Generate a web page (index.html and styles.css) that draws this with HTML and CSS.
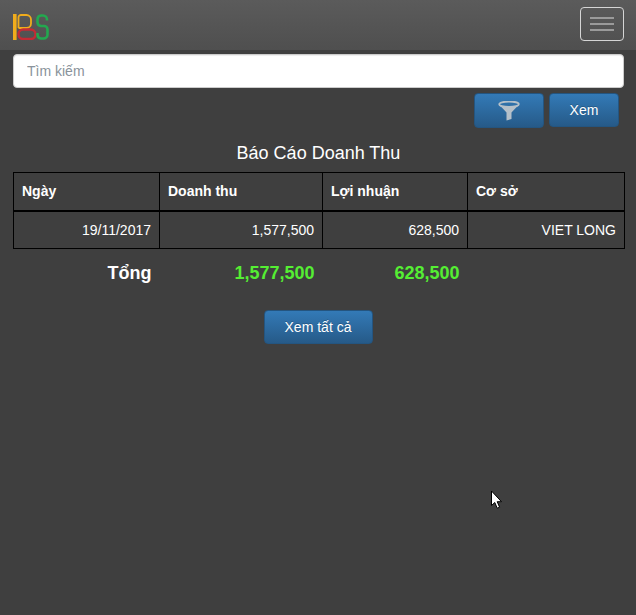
FILE: index.html
```html
<!DOCTYPE html>
<html lang="vi">
<head>
<meta charset="utf-8">
<title>Báo Cáo Doanh Thu</title>
<link rel="stylesheet" href="styles.css">
</head>
<body>
<nav class="navbar">
  <svg class="logo" width="36" height="26" viewBox="0 0 36 26" fill="none">
    <rect x="0" y="0" width="3.6" height="26" fill="#f0ac1c"/>
    <path d="M6 1.2h7a5.2 5.2 0 0 1 5.2 5.2v0a5.2 5.2 0 0 1-5.2 5.2h-7" stroke="#c8353a" stroke-width="0" />
    <path d="M5.5 14V3.5A2.5 2.5 0 0 1 8 1h5.5A4.5 4.5 0 0 1 18 5.500v4A4.500 4.500 0 0 1 13.500 14H5.500" stroke="#f0ac1c" stroke-width="1.800"/>
    <rect x="5.500" y="15.500" width="17" height="9.500" rx="4.700" stroke="#c42b35" stroke-width="2.400"/>
    <path d="M34 6.500V5.500A4 4 0 0 0 30 1.500H28A4 4 0 0 0 24.500 5.500V8A4 4 0 0 0 28 12H31A3.500 3.500 0 0 1 34.500 15.500V20.500A4 4 0 0 1 30.500 24.500H28A4 4 0 0 1 24.500 20.500V19" stroke="#23a84f" stroke-width="2.600"/>
  </svg>
  <button class="toggler" type="button" aria-label="Menu">
    <span class="bar"></span><span class="bar"></span><span class="bar"></span>
  </button>
</nav>
<main class="content">
  <input class="search" type="text" placeholder="Tìm kiếm">
  <div class="actions">
    <button class="btn btn-filter" type="button" aria-label="Lọc">
      <svg width="22" height="20" viewBox="0 0 22 20">
        <ellipse cx="11" cy="3.200" rx="9.800" ry="2.700" fill="none" stroke="#b5c0c9" stroke-width="1.800"/>
        <path d="M1.500 4 8.500 11.500V19.500L13.500 18V11.500L20.500 4C17 6.500 5 6.500 1.500 4Z" fill="#b5c0c9"/>
      </svg>
    </button>
    <button class="btn btn-view" type="button">Xem</button>
  </div>
  <h1 class="title">Báo Cáo Doanh Thu</h1>
  <table class="report">
    <colgroup>
      <col class="c1"><col class="c2"><col class="c3"><col class="c4">
    </colgroup>
    <thead>
      <tr><th>Ngày</th><th>Doanh thu</th><th>Lợi nhuận</th><th>Cơ sở</th></tr>
    </thead>
    <tbody>
      <tr><td>19/11/2017</td><td>1,577,500</td><td>628,500</td><td>VIET LONG</td></tr>
    </tbody>
    <tfoot>
      <tr><td class="total-label">Tổng</td><td class="total">1,577,500</td><td class="total">628,500</td><td></td></tr>
    </tfoot>
  </table>
  <div class="more">
    <button class="btn btn-all" type="button">Xem tất cả</button>
  </div>
</main>
<svg class="cursor" width="13" height="20" viewBox="0 0 13 20">
  <path d="M1.500 1V15.500L4.800 12.500L7.200 18.200L9.600 17.200L7.200 11.700H11.500Z" fill="#fff" stroke="#000" stroke-width="1"/>
</svg>
</body>
</html>
```

FILE: styles.css
```css
* { box-sizing: border-box; }
html, body { height: 100%; }
body {
  margin: 0;
  background: #3f3f3f;
  color: #fff;
  font-family: "Liberation Sans", Arial, sans-serif;
  font-size: 14px;
  position: relative;
  overflow: hidden;
}
.navbar {
  height: 50px;
  display: flex;
  align-items: center;
  justify-content: space-between;
  padding: 0 12px 0 13px;
  background: linear-gradient(#5b5b5b, #4f4f4f);
}
.logo { display: block; margin-top: 3px; }
.toggler {
  width: 44px;
  height: 34px;
  margin-top: -3px;
  padding: 0;
  display: flex;
  flex-direction: column;
  align-items: center;
  justify-content: center;
  gap: 4px;
  background: transparent;
  border: 1px solid #d5d5d5;
  border-radius: 4px;
}
.bar { width: 24px; height: 2px; background: #9a9a9a; }
.content { padding: 4px 12px 0 13px; }
.search {
  display: block;
  width: 100%;
  height: 34px;
  padding: 0 13px;
  border: 1px solid #ccc;
  border-radius: 4px;
  background: #fff;
  box-shadow: inset 0 1px 1px rgba(0,0,0,.075);
  font-family: inherit;
  font-size: 14px;
  outline: 0;
}
.search::placeholder { color: #8a939b; opacity: 1; }
.actions {
  display: flex;
  justify-content: flex-end;
  align-items: flex-start;
  gap: 5px;
  margin-top: 5px;
  padding-right: 5px;
}
.btn {
  display: flex;
  align-items: center;
  justify-content: center;
  padding: 0;
  color: #fff;
  font-family: inherit;
  font-size: 14px;
  background: linear-gradient(#337ab7, #265a88);
  border: 1px solid #245580;
  border-radius: 4px;
  text-shadow: 0 -1px 0 rgba(0,0,0,.2);
}
.btn-filter { width: 70px; height: 35px; }
.btn-view { width: 70px; height: 34px; }
.title {
  margin: 15px 0 0;
  height: 29px;
  line-height: 20px;
  text-align: center;
  font-size: 18px;
  font-weight: 400;
}
.report {
  width: 611px;
  table-layout: fixed;
  border-collapse: collapse;
}
.c1 { width: 146px; }
.c2 { width: 163px; }
.c3 { width: 145px; }
.c4 { width: 157px; }
.report th, .report tbody td {
  border: 1px solid #000;
  padding: 8px;
  height: 38px;
  line-height: 20px;
}
.report th {
  border-bottom-width: 2px;
  text-align: left;
  font-weight: 700;
}
.report tbody td { text-align: right; }
.report tfoot td {
  padding: 9px 8px 0;
  height: 40px;
  line-height: 20px;
  text-align: right;
  font-size: 18px;
  font-weight: 700;
}
.report tfoot .total { color: #55ee33; }
.more {
  display: flex;
  justify-content: center;
  margin-top: 21px;
  padding-right: 1px;
}
.btn-all { width: 109px; height: 34px; }
.cursor { position: absolute; left: 490px; top: 490px; }
```
